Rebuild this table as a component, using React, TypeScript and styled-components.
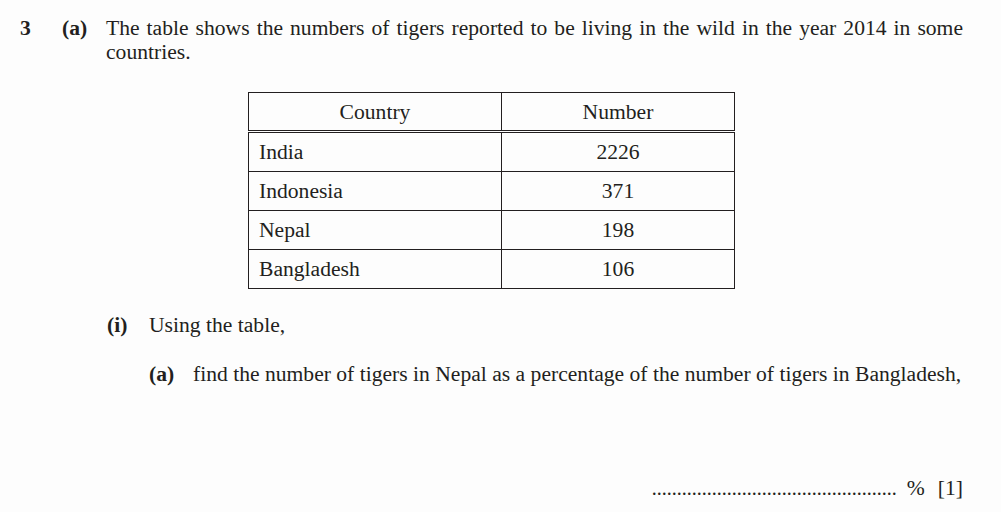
import React from 'react';
import styled, { createGlobalStyle } from 'styled-components';

const GlobalStyle = createGlobalStyle`
  html, body {
    margin: 0;
    padding: 0;
    background: #fdfdfd;
  }
  body {
    font-family: "Liberation Serif", "Times New Roman", serif;
    color: #231f20;
    font-size: 21.6px;
  }
`;

const Page = styled.div`
  width: 1001px;
  height: 512px;
  box-sizing: border-box;
  padding: 16px 38px 0 20px;
  overflow: hidden;
`;

const QuestionRow = styled.div`
  display: flex;
  line-height: 24px;
`;

const QuestionNumber = styled.div`
  width: 42px;
  font-weight: bold;
`;

const Label = styled.div<{ $width: number }>`
  width: ${(p) => p.$width}px;
  flex-shrink: 0;
  font-weight: bold;
`;

const Body = styled.div<{ $justify?: boolean }>`
  flex: 1;
  text-align: ${(p) => (p.$justify ? 'justify' : 'left')};
`;

const TableWrap = styled.div`
  padding: 28px 0 0 228px;
`;

const DataTable = styled.table`
  border-collapse: collapse;
  table-layout: fixed;
  width: 484px;
  border: 1px solid #231f20;
  line-height: 24px;
`;

const HeadCell = styled.th<{ $width: number }>`
  font-weight: normal;
  text-align: center;
  height: 37px;
  width: ${(p) => p.$width}px;
  padding: 0;
  border: 1px solid #231f20;
  border-bottom: 3px double #231f20;
`;

const Cell = styled.td<{ $align?: 'left' | 'center' }>`
  text-align: ${(p) => p.$align ?? 'left'};
  height: 38px;
  padding: 0 0 0 ${(p) => (p.$align === 'center' ? 0 : 10)}px;
  border: 1px solid #231f20;
`;

const SubPart = styled.div<{ $indent: number; $top: number }>`
  display: flex;
  line-height: 24px;
  padding-left: ${(p) => p.$indent}px;
  margin-top: ${(p) => p.$top}px;
`;

const AnswerLine = styled.div`
  display: flex;
  justify-content: flex-end;
  align-items: baseline;
  margin-top: 90px;
  line-height: 24px;
`;

const Dots = styled.span`
  font-size: 20px;
  margin-right: 10px;
`;

const Marks = styled.span`
  margin-left: 13px;
`;

const rows = [
  { country: 'India', number: 2226 },
  { country: 'Indonesia', number: 371 },
  { country: 'Nepal', number: 198 },
  { country: 'Bangladesh', number: 106 },
];

export default function App() {
  return (
    <>
      <GlobalStyle />
      <Page>
        <QuestionRow>
          <QuestionNumber>3</QuestionNumber>
          <Label $width={44}>(a)</Label>
          <Body $justify>
            The table shows the numbers of tigers reported to be living in the wild in the year 2014 in some
            countries.
          </Body>
        </QuestionRow>
        <TableWrap>
          <DataTable>
            <thead>
              <tr>
                <HeadCell $width={252}>Country</HeadCell>
                <HeadCell $width={232}>Number</HeadCell>
              </tr>
            </thead>
            <tbody>
              {rows.map((row) => (
                <tr key={row.country}>
                  <Cell>{row.country}</Cell>
                  <Cell $align="center">{row.number}</Cell>
                </tr>
              ))}
            </tbody>
          </DataTable>
        </TableWrap>
        <SubPart $indent={87} $top={24}>
          <Label $width={42}>(i)</Label>
          <Body>Using the table,</Body>
        </SubPart>
        <SubPart $indent={129} $top={25}>
          <Label $width={44}>(a)</Label>
          <Body>find the number of tigers in Nepal as a percentage of the number of tigers in Bangladesh,</Body>
        </SubPart>
        <AnswerLine>
          <Dots>{'.'.repeat(49)}</Dots>
          <span>%</span>
          <Marks>[1]</Marks>
        </AnswerLine>
      </Page>
    </>
  );
}
